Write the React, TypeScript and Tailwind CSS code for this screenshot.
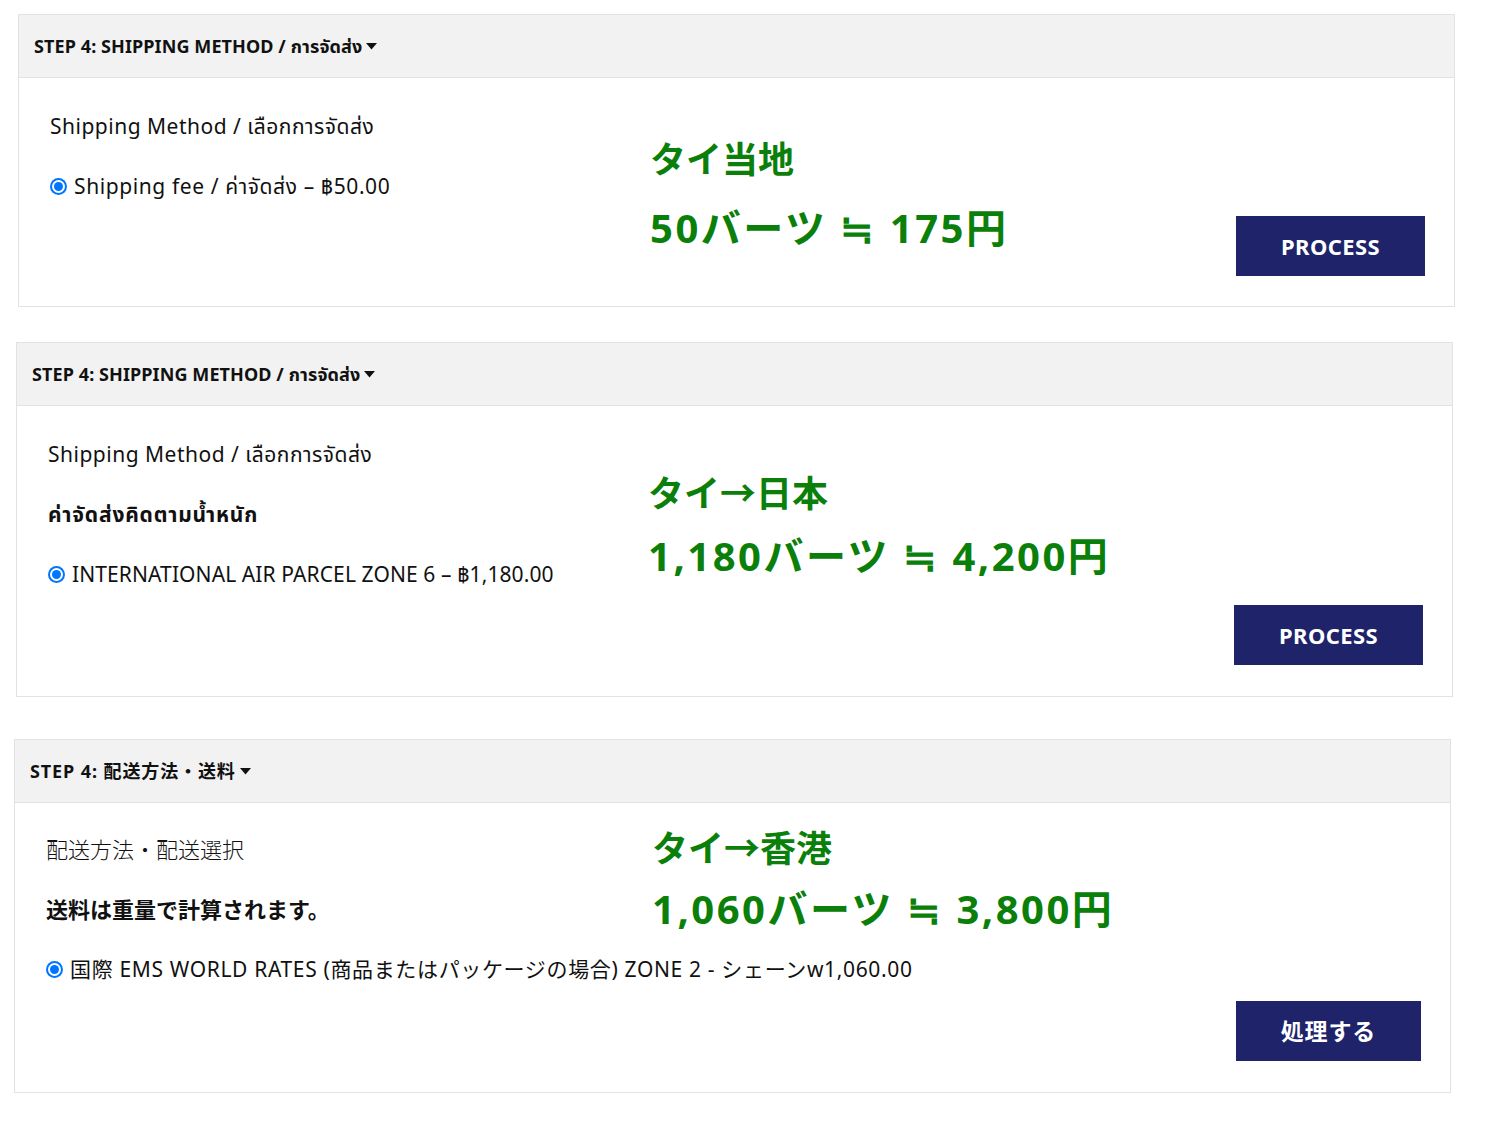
const font = { fontFamily: '"Noto Sans", "Noto Sans Thai", "Noto Sans CJK JP", sans-serif' };

const Caret = () => (
  <svg width="11" height="7" viewBox="0 0 11 7" className="ml-[4px] inline-block">
    <path d="M0 0 L11 0 L5.5 6.5 Z" fill="#111" />
  </svg>
);

const Radio = () => (
  <span className="inline-flex h-[17px] w-[17px] shrink-0 items-center justify-center rounded-full bg-[#0075ff]">
    <span className="flex h-[13px] w-[13px] items-center justify-center rounded-full bg-white">
      <span className="h-[9px] w-[9px] rounded-full bg-[#0075ff]" />
    </span>
  </span>
);

const Header = ({ title, ja }: { title: string; ja?: boolean }) => (
  <div className="flex h-[63px] items-center border-b border-[#e2e2e2] bg-[#f2f2f2] px-[15px]">
    <span className={`text-[18px] font-bold text-[#111] ${ja ? "tracking-[0.9px]" : "tracking-[0.1px]"}`}>
      {title}
    </span>
    <Caret />
  </div>
);

const Button = ({ label, ja }: { label: string; ja?: boolean }) => (
  <button
    className={`h-[60px] bg-[#1e236a] px-[45px] font-bold text-white ${
      ja ? "text-[23px] tracking-[0.8px]" : "text-[22px] tracking-[0.4px]"
    }`}
  >
    {label}
  </button>
);

const Line = ({ children, className = "" }: { children: React.ReactNode; className?: string }) => (
  <div className={`flex h-[28px] items-center whitespace-nowrap text-[21px] leading-[28px] text-[#111] ${className}`}>
    {children}
  </div>
);

const Green = ({ children, big }: { children: React.ReactNode; big?: boolean }) => (
  <div
    className={`whitespace-nowrap font-bold text-[#0a800a] ${
      big ? "h-[48px] text-[40px] leading-[48px] tracking-[2.5px]" : "h-[44px] text-[36px] leading-[44px]"
    }`}
  >
    {children}
  </div>
);

export default function App() {
  return (
    <div style={font} className="min-h-[1144px] w-[1488px] bg-white pt-[14px]">
      {/* panel 1 */}
      <div className="ml-[18px] w-[1437px] border border-[#e2e2e2]">
        <Header title="STEP 4: SHIPPING METHOD / การจัดส่ง" />
        <div className="pb-[30px] pl-[31px] pr-[29px] pt-[34px]">
          <div className="grid grid-cols-[600px_1fr]">
            <div className="flex flex-col gap-[32px]">
              <Line className="tracking-[0.5px]">Shipping Method / เลือกการจัดส่ง</Line>
              <Line>
                <Radio />
                <span className="ml-[7px] tracking-[0.6px]">Shipping fee / ค่าจัดส่ง – ฿50.00</span>
              </Line>
            </div>
            <div className="pt-[26px]">
              <Green>タイ当地</Green>
              <div className="mt-[22px] flex items-start justify-between">
                <Green big>50バーツ ≒ 175円</Green>
                <div className="mt-[12px]">
                  <Button label="PROCESS" />
                </div>
              </div>
            </div>
          </div>
        </div>
      </div>

      {/* panel 2 */}
      <div className="ml-[16px] mt-[35px] w-[1437px] border border-[#e2e2e2]">
        <Header title="STEP 4: SHIPPING METHOD / การจัดส่ง" />
        <div className="pb-[31px] pl-[31px] pr-[29px] pt-[34px]">
          <div className="grid grid-cols-[600px_1fr]">
            <div className="flex flex-col gap-[32px]">
              <Line className="tracking-[0.5px]">Shipping Method / เลือกการจัดส่ง</Line>
              <Line className="font-bold tracking-[0.8px]">ค่าจัดส่งคิดตามน้ำหนัก</Line>
              <Line>
                <Radio />
                <span className="ml-[7px] tracking-[0.1px]">INTERNATIONAL AIR PARCEL ZONE 6 – ฿1,180.00</span>
              </Line>
            </div>
            <div className="pt-[32px]">
              <Green>タイ→日本</Green>
              <div className="mt-[16px]">
                <Green big>1,180バーツ ≒ 4,200円</Green>
              </div>
            </div>
          </div>
          <div className="mt-[17px] flex justify-end">
            <Button label="PROCESS" />
          </div>
        </div>
      </div>

      {/* panel 3 */}
      <div className="ml-[14px] mt-[42px] w-[1437px] border border-[#e2e2e2]">
        <Header title="STEP 4: 配送方法・送料" ja />
        <div className="pb-[31px] pl-[31px] pr-[29px] pt-[32px]">
          <div className="grid grid-cols-[606px_1fr]">
            <div className="flex flex-col gap-[32px]">
              <Line className="text-[22px] font-light">配送方法・配送選択</Line>
              <Line className="text-[22px] font-bold">送料は重量で計算されます。</Line>
              <Line>
                <Radio />
                <span className="ml-[7px] tracking-[0.65px]">
                  国際 EMS WORLD RATES (商品またはパッケージの場合) ZONE 2 - シェーンw1,060.00
                </span>
              </Line>
            </div>
            <div className="-mt-[8px]">
              <Green>タイ→香港</Green>
              <div className="mt-[14px]">
                <Green big>1,060バーツ ≒ 3,800円</Green>
              </div>
            </div>
          </div>
          <div className="mt-[18px] flex justify-end">
            <Button label="処理する" ja />
          </div>
        </div>
      </div>
    </div>
  );
}
